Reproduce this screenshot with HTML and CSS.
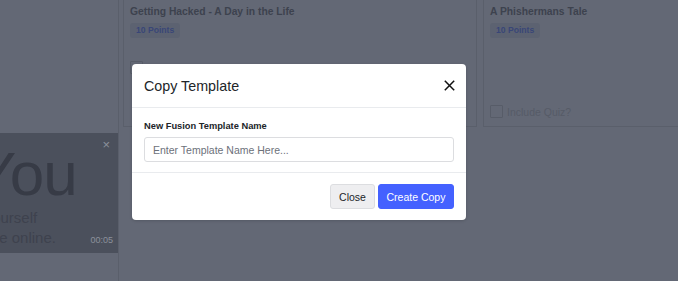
FILE: index.html
```html
<!DOCTYPE html>
<html lang="en">
<head>
<meta charset="utf-8">
<title>Copy Template</title>
<link rel="stylesheet" href="styles.css">
</head>
<body>
<div class="page">
  <aside class="sidebar"></aside>
  <main class="content">
    <section class="card card-mid">
      <h3 class="card-title">Getting Hacked - A Day in the Life</h3>
      <span class="badge">10 Points</span>
      <label class="quiz quiz-mid"><span class="box"></span>Include Quiz?</label>
    </section>
    <section class="card card-right">
      <h3 class="card-title">A Phishermans Tale</h3>
      <span class="badge">10 Points</span>
      <label class="quiz quiz-right"><span class="box"></span>Include Quiz?</label>
    </section>
  </main>
</div>

<div class="video-pop">
  <span class="video-close">&times;</span>
  <div class="video-big">You</div>
  <div class="video-sub sub-one">Protect yourself</div>
  <div class="video-sub sub-two">Stay safe online.</div>
  <span class="video-time">00:05</span>
</div>

<div class="modal">
  <div class="modal-header">
    <h2 class="modal-title">Copy Template</h2>
    <button class="modal-x" aria-label="Close">
      <svg width="11" height="11" viewBox="0 0 11 11"><path d="M0.8 0.8 L10.2 10.2 M10.2 0.8 L0.8 10.2" stroke="#111" stroke-width="1.5" fill="none"/></svg>
    </button>
  </div>
  <div class="modal-body">
    <label class="field-label">New Fusion Template Name</label>
    <input class="field-input" type="text" placeholder="Enter Template Name Here...">
  </div>
  <div class="modal-footer">
    <button class="btn btn-light">Close</button>
    <button class="btn btn-primary">Create Copy</button>
  </div>
</div>
</body>
</html>
```

FILE: styles.css
```css
* { box-sizing: border-box; }
html, body { margin: 0; padding: 0; }
body {
  width: 678px;
  height: 281px;
  overflow: hidden;
  background: #636875;
  font-family: "Liberation Sans", Arial, sans-serif;
  position: relative;
}
.page {
  display: flex;
  height: 281px;
}
.sidebar {
  width: 119px;
  flex: none;
  border-right: 1px solid #5a5f6b;
}
.content {
  flex: 1;
  display: flex;
  gap: 6px;
  padding-left: 4px;
  align-items: flex-start;
}
.card {
  height: 127px;
  border: 1px solid #5a5f6b;
  border-top: none;
  padding: 5px 6px 0;
  display: flex;
  flex-direction: column;
  align-items: flex-start;
}
.card-mid { width: 354px; flex: none; }
.card-right { flex: 1; border-right: none; }
.card-title {
  margin: 0;
  font-size: 10.3px;
  line-height: 14px;
  font-weight: bold;
  color: #3d424e;
}
.badge {
  margin-top: 4px;
  height: 15px;
  line-height: 15px;
  padding: 0 6px;
  border-radius: 3px;
  background: #5c6271;
  color: #394677;
  font-size: 8.6px;
  font-weight: bold;
}
.quiz {
  display: flex;
  align-items: center;
  gap: 4px;
  font-size: 10.5px;
  color: #565b67;
}
.quiz-mid { margin-top: 23px; }
.quiz-right { margin-top: auto; margin-bottom: 8px; }
.box {
  width: 13px;
  height: 13px;
  border: 1px solid #575c68;
  border-radius: 1px;
}

.video-pop {
  position: absolute;
  left: 0;
  top: 133px;
  width: 118px;
  height: 120px;
  background: #4b505c;
  overflow: hidden;
}
.video-big {
  margin: 9px 0 0 -25px;
  font-size: 62px;
  line-height: 64px;
  color: #373b46;
  letter-spacing: -1px;
  white-space: nowrap;
}
.video-sub {
  font-size: 15px;
  line-height: 18px;
  color: #3e424e;
  white-space: nowrap;
}
.sub-one { margin: 3px 0 0 -67px; }
.sub-two { margin: 2px 0 0 -55px; }
.video-close {
  position: absolute;
  right: 8px;
  top: 4px;
  font-size: 13px;
  color: #8b909b;
}
.video-time {
  position: absolute;
  right: 5px;
  bottom: 8px;
  font-size: 9px;
  color: #8b909b;
}

.modal {
  position: absolute;
  left: 132px;
  top: 64px;
  width: 334px;
  background: #fff;
  border-radius: 4px;
  box-shadow: 0 1px 3px rgba(0,0,0,0.15);
}
.modal-header {
  height: 44px;
  display: flex;
  align-items: center;
  justify-content: space-between;
  padding: 0 11px 0 12px;
  border-bottom: 1px solid #e9ebee;
}
.modal-title {
  margin: 0;
  font-size: 14.3px;
  font-weight: normal;
  color: #212529;
}
.modal-x {
  border: none;
  background: none;
  padding: 0;
  width: 11px;
  height: 11px;
  display: flex;
}
.modal-body {
  padding: 12px 12px 10px;
  display: flex;
  flex-direction: column;
}
.field-label {
  font-size: 9.3px;
  line-height: 12px;
  font-weight: bold;
  color: #212529;
}
.field-input {
  margin-top: 5px;
  height: 25px;
  width: 100%;
  border: 1px solid #dcdde0;
  border-radius: 3px;
  padding: 0 8px;
  font-family: "Liberation Sans", Arial, sans-serif;
  font-size: 10.5px;
  color: #212529;
}
.field-input::placeholder { color: #6c717a; }
.modal-footer {
  border-top: 1px solid #e9ebee;
  padding: 11px 12px 11px;
  display: flex;
  justify-content: flex-end;
  gap: 3px;
}
.btn {
  height: 25px;
  border-radius: 3px;
  font-family: "Liberation Sans", Arial, sans-serif;
  font-size: 10.5px;
  padding: 0;
  white-space: nowrap;
  cursor: pointer;
}
.btn-light {
  width: 45px;
  background: #eeeef0;
  border: 1px solid #dcdde0;
  color: #212529;
}
.btn-primary {
  width: 76px;
  background: #4461ff;
  border: 1px solid #4461ff;
  color: #fff;
}
```
